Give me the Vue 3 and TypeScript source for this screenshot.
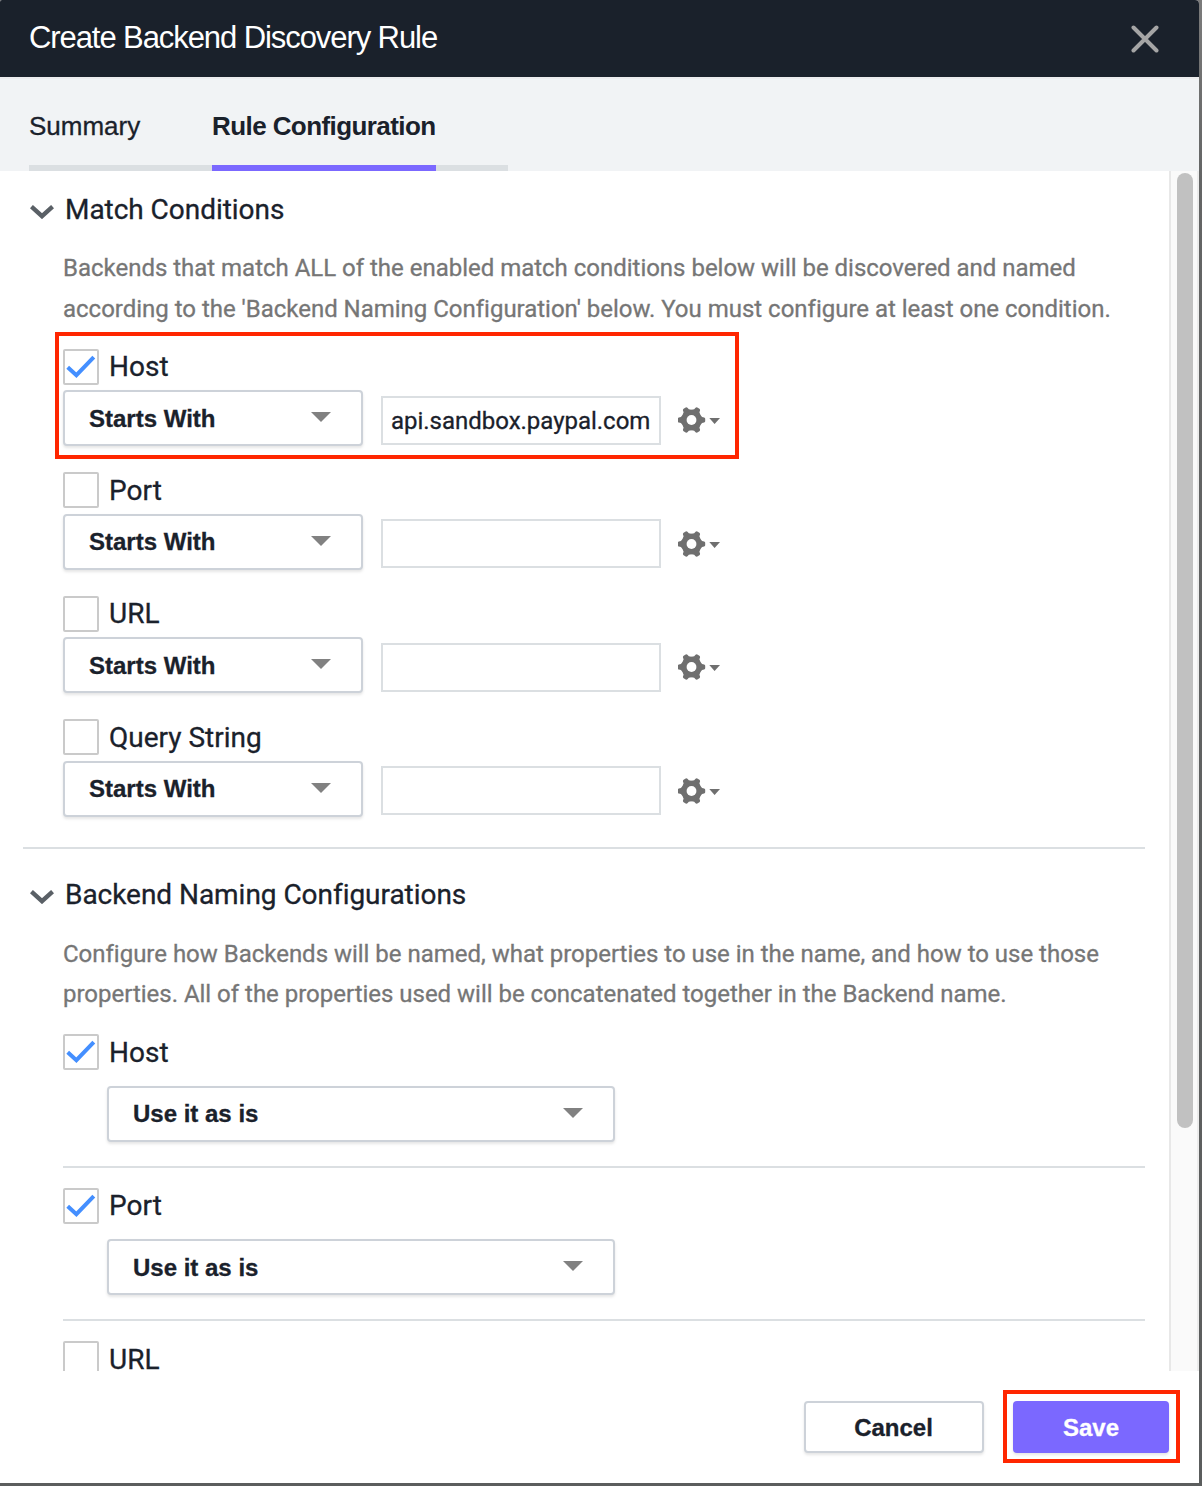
<script setup lang="ts">
import { ref } from 'vue'

interface MatchCondition {
  label: string
  enabled: boolean
  operator: string
  value: string
  highlighted?: boolean
}

interface NamingProperty {
  label: string
  enabled: boolean
  usage?: string
}

const conditions = ref<MatchCondition[]>([
  { label: 'Host', enabled: true, operator: 'Starts With', value: 'api.sandbox.paypal.com', highlighted: true },
  { label: 'Port', enabled: false, operator: 'Starts With', value: '' },
  { label: 'URL', enabled: false, operator: 'Starts With', value: '' },
  { label: 'Query String', enabled: false, operator: 'Starts With', value: '' },
])

const properties = ref<NamingProperty[]>([
  { label: 'Host', enabled: true, usage: 'Use it as is' },
  { label: 'Port', enabled: true, usage: 'Use it as is' },
  { label: 'URL', enabled: false },
])
</script>

<template>
  <div class="backdrop">
    <div class="dialog">
      <header class="titlebar">
        <h1 class="title">Create Backend Discovery Rule</h1>
        <svg class="close" width="28" height="28" viewBox="0 0 28 28">
          <path d="M2.5 2.5L25.5 25.5M25.5 2.5L2.5 25.5" stroke="#a5a5a5" stroke-width="4" stroke-linecap="round" />
        </svg>
      </header>

      <nav class="tabs">
        <div class="tab-strip">
          <div class="tab first"><span class="t-summary">Summary</span></div>
          <div class="tab active"><span class="t-rule">Rule Configuration</span></div>
          <div class="tab rest"></div>
        </div>
      </nav>

      <div class="body">
        <main class="content">
          <section class="match">
            <div class="heading">
              <svg class="chevron" width="24" height="14" viewBox="0 0 24 14">
                <path d="M1.4 1.6L12 11.2L22.6 1.6" fill="none" stroke="#5a6066" stroke-width="4.4" />
              </svg>
              <h2>Match Conditions</h2>
            </div>
            <p class="desc">
              <span class="line">Backends that match ALL of the enabled match conditions below will be discovered and named</span>
              <span class="line">according to the 'Backend Naming Configuration' below. You must configure at least one condition.</span>
            </p>
            <div v-for="c in conditions" :key="c.label" class="condition">
              <div class="check-row">
                <span class="checkbox">
                  <svg v-if="c.enabled" width="32" height="32" viewBox="0 0 32 32">
                    <path d="M2.7 16.2L11.4 24.2L28.8 6.2" fill="none" stroke="#448fff" stroke-width="4" />
                  </svg>
                </span>
                <span class="label">{{ c.label }}</span>
              </div>
              <div class="controls">
                <div class="select">
                  <span class="select-text">{{ c.operator }}</span>
                  <span class="arrow"></span>
                </div>
                <div class="field"><span>{{ c.value }}</span></div>
                <svg class="gear" width="44" height="28" viewBox="0 0 44 28">
                  <g fill="#6f6f6f" transform="translate(13.5 14)">
                    <path
                      v-for="n in 6"
                      :key="n"
                      :transform="`rotate(${n * 60})`"
                      d="M5 -8.2L8.9 -5.1L10.6 -3L12.6 -2.6Q13.7 -2.2 13.7 -1.2V1.2Q13.7 2.2 12.6 2.6L10.6 3L8.9 5.1L5 8.2L3.2 3V-3Z"
                    />
                    <circle r="4.9" fill="#fff" />
                  </g>
                  <path d="M31.3 12H42L36.6 18Z" fill="#6f6f6f" />
                </svg>
              </div>
              <div v-if="c.highlighted" class="outline-host"></div>
            </div>
          </section>

          <section class="naming">
            <div class="heading">
              <svg class="chevron" width="24" height="14" viewBox="0 0 24 14">
                <path d="M1.4 1.6L12 11.2L22.6 1.6" fill="none" stroke="#5a6066" stroke-width="4.4" />
              </svg>
              <h2>Backend Naming Configurations</h2>
            </div>
            <p class="desc">
              <span class="line">Configure how Backends will be named, what properties to use in the name, and how to use those</span>
              <span class="line">properties. All of the properties used will be concatenated together in the Backend name.</span>
            </p>
            <div v-for="p in properties" :key="p.label" class="property">
              <div class="check-row">
                <span class="checkbox">
                  <svg v-if="p.enabled" width="32" height="32" viewBox="0 0 32 32">
                    <path d="M2.7 16.2L11.4 24.2L28.8 6.2" fill="none" stroke="#448fff" stroke-width="4" />
                  </svg>
                </span>
                <span class="label">{{ p.label }}</span>
              </div>
              <div v-if="p.usage" class="select wide">
                <span class="select-text">{{ p.usage }}</span>
                <span class="arrow"></span>
              </div>
            </div>
          </section>
        </main>
        <div class="track"><div class="thumb"></div></div>
      </div>

      <footer class="footer">
        <button class="btn cancel" type="button">Cancel</button>
        <div class="save-wrap">
          <button class="btn save" type="button">Save</button>
          <div class="outline-save"></div>
        </div>
      </footer>
    </div>
  </div>
</template>

<style>
body {
  margin: 0;
}
</style>

<style scoped>
* {
  box-sizing: border-box;
}
.backdrop {
  width: 1202px;
  height: 1486px;
  overflow: hidden;
  background: linear-gradient(#7b7b7b 0, #646565 12%, #5b5d5d 100%);
  color: #1a212b;
  font-family: Roboto, sans-serif;
}
.dialog {
  width: 1199px;
  height: 1483px;
  display: flex;
  flex-direction: column;
  background: #fff;
  border-radius: 2px 4px 0 0;
  overflow: hidden;
}
.titlebar {
  flex: none;
  height: 79px;
  padding: 0 40px 2px 29px;
  display: flex;
  align-items: center;
  justify-content: space-between;
  background: #1a212b;
  border-bottom: 2px solid #ececee;
}
.title {
  margin: 0;
  font: 400 31px/40px 'Liberation Sans', sans-serif;
  letter-spacing: -1.08px;
  color: #fff;
  white-space: nowrap;
}
.close {
  margin-top: 3px;
}
.tabs {
  flex: none;
  height: 92px;
  padding-left: 29px;
  background: #f1f3f5;
}
.tab-strip {
  display: flex;
  width: 479px;
  height: 92px;
}
.tab {
  padding-top: 32px;
  border-bottom: 6px solid #dbdfe2;
  font: 400 26px/30px 'Liberation Sans', sans-serif;
  white-space: nowrap;
}
.tab.first {
  width: 183px;
}
.tab.active {
  width: 224px;
  border-color: #7b68ff;
  font-weight: 700;
}
.tab.rest {
  flex: 1;
}
.t-summary {
  -webkit-text-stroke: 0.3px;
}
.t-rule {
  letter-spacing: -0.58px;
}
.body {
  flex: none;
  height: 1200px;
  display: flex;
  overflow: hidden;
}
.content {
  width: 1169px;
  height: 1200px;
  padding: 0 24px 0 23px;
  overflow: hidden;
}
.track {
  width: 30px;
  height: 1200px;
  padding: 2px 0 0 6px;
  background: #fafafa;
  border-left: 2px solid #e8e8e8;
  border-right: 2px solid #ececec;
}
.thumb {
  width: 16px;
  height: 955px;
  border-radius: 8px;
  background: #c1c1c1;
}
.match {
  height: 678px;
  padding-top: 19px;
  border-bottom: 2px solid #dbdfe2;
}
.naming {
  padding-top: 26px;
}
.heading {
  display: flex;
  align-items: center;
  height: 40px;
  padding-left: 7px;
}
.chevron {
  margin: 4px 11px 0 0;
}
h2 {
  margin: 0;
  font-size: 28px;
  line-height: 40px;
  font-weight: 400;
  letter-spacing: -0.04px;
  white-space: nowrap;
  -webkit-text-stroke: 0.3px;
}
.desc {
  margin: 18px 0 0 40px;
  height: 81px;
  font-size: 24px;
  line-height: 40.5px;
  letter-spacing: -0.015px;
  color: #767676;
  -webkit-text-stroke: 0.3px;
}
.line {
  display: block;
  width: max-content;
  white-space: nowrap;
}
.condition {
  position: relative;
  height: 123.5px;
  margin-left: 40px;
}
.desc + .condition {
  margin-top: 19.75px;
}
.check-row {
  display: flex;
  align-items: center;
  height: 36px;
}
.checkbox {
  width: 36px;
  height: 36px;
  border: 2px solid #cacaca;
  border-radius: 2px;
  background: #fff;
}
.checkbox svg {
  display: block;
}
.label {
  margin-left: 10px;
  padding-top: 0.5px;
  font-size: 28px;
  line-height: 36px;
  -webkit-text-stroke: 0.3px;
}
.controls {
  display: flex;
  align-items: flex-start;
  margin-top: 5.5px;
}
.select {
  width: 300px;
  height: 56px;
  padding: 0 30px 2px 24px;
  display: flex;
  align-items: center;
  justify-content: space-between;
  border: 2px solid #cdd2d9;
  border-radius: 4px;
  background: #fff;
  box-shadow: 0 2px 3px rgba(0, 0, 0, 0.1);
}
.select-text {
  padding-top: 2.6px;
  font: 700 24px/30px 'Liberation Sans', sans-serif;
  white-space: nowrap;
  -webkit-text-stroke: 0.3px;
}
.arrow {
  border: solid transparent;
  border-width: 10px 10px 0;
  border-top-color: #818181;
}
.field {
  width: 280px;
  height: 49px;
  margin: 5.5px 0 0 18px;
  padding: 1px 8px 0;
  border: 2px solid #dbdfe2;
  font-size: 24px;
  line-height: 45px;
  letter-spacing: -0.02px;
  white-space: nowrap;
  -webkit-text-stroke: 0.3px;
}
.gear {
  margin: 16px 0 0 17px;
}
.outline-host {
  position: absolute;
  left: -8px;
  top: -16.75px;
  width: 684px;
  height: 127px;
  border: 4px solid #ff2600;
}
.naming .desc {
  padding-top: 1px;
  line-height: 40px;
}
.property {
  height: 153px;
  margin-left: 40px;
}
.desc + .property {
  height: 132px;
  margin-top: 20px;
}
.property + .property {
  border-top: 2px solid #dbdfe2;
  padding-top: 20px;
}
.property .label {
  padding-top: 1px;
}
.property:nth-of-type(3) .label {
  padding-top: 0;
}
.wide {
  width: 508px;
  margin: 16px 0 0 44px;
}
.property + .property .wide {
  margin-top: 15px;
}
.property + .property .select-text {
  padding-top: 4px;
}
.footer {
  flex: 1;
  display: flex;
  align-items: flex-start;
  justify-content: flex-end;
  gap: 29px;
  padding: 30px 30px 0 0;
}
.btn {
  display: block;
  height: 52px;
  padding: 1px 0 0;
  border-radius: 4px;
  font: 700 24px/30px 'Liberation Sans', sans-serif;
  box-shadow: 0 2px 3px rgba(0, 0, 0, 0.1);
  -webkit-text-stroke: 0.3px;
}
.cancel {
  width: 180px;
  padding-right: 1px;
  border: 2px solid #cdd2d9;
  background: #fff;
  color: #1a212b;
}
.save {
  width: 156px;
  border: 0;
  background: #7b68ff;
  color: #fff;
}
.save-wrap {
  position: relative;
}
.outline-save {
  position: absolute;
  left: -10px;
  top: -11px;
  width: 177px;
  height: 73px;
  border: 4px solid #ff2600;
}
</style>
